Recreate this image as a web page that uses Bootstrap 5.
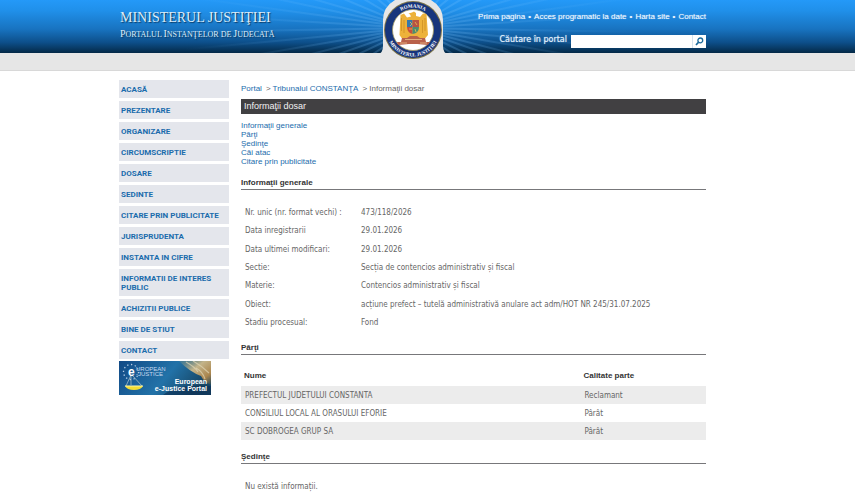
<!DOCTYPE html>
<html lang="ro">
<head>
<meta charset="utf-8">
<meta name="viewport" content="width=device-width, initial-scale=1">
<title>Informații dosar - Tribunalul CONSTANȚA</title>
<link href="https://cdn.jsdelivr.net/npm/bootstrap@5.3.0/dist/css/bootstrap.min.css" rel="stylesheet">
<style>
  :root { --blue: #1b6cac; --line: #77777a; }
  body { font: 8px/9px "Liberation Sans", Arial, sans-serif; color: #666; background: #fff; }
  a { color: var(--blue); text-decoration: none; }
  a:hover { text-decoration: underline; }
  .page-frame { padding-right: 30px; }
  .page-inner { max-width: 587px; margin: 0 auto; }
  .site-head { position: relative; background: linear-gradient(#2499f8 0, #2090ea 20%, #1873c0 55%, #0d4f8a 80%, #042947 100%); height: 53px; }
  .rays { position: absolute; inset: 0; overflow: hidden; padding-right: 30px; }
  .rays svg { display: block; margin: 0 auto; width: 587px; height: 53px; }
  .brand-name { font: 14px/18px "Liberation Serif", "Times New Roman", serif; }
  .brand-sub { font: 8px/14px "Liberation Serif", "Times New Roman", serif; }
  .brand-sub b { font-size: 10px; font-weight: normal; }
  .brand a { color: #dcecf8; text-shadow: 1px 1px 1px #0a3b66; padding: 9px 0 0 1px; }
  .top-links { column-gap: 3px; font-size: 8px; line-height: 10px; padding-top: 12px; text-shadow: 0 0 1px #9cc8ee; }
  .top-links a, .top-links span { color: #eef7ff; }
  .search label { font: 8px/12px "DejaVu Sans", Verdana, sans-serif; color: #e6f2fc; text-shadow: 0 0 1px #a9cdec; padding-bottom: 2px; }
  .search .form-control { width: 121px; height: 13px; min-height: 0; padding: 0 3px; font-size: 8px; border: 0; border-radius: 0; background: #fff; }
  .search button { width: 14px; height: 13px; padding: 0; border: 0; border-left: 1px solid #d5e3ee; border-radius: 0; background: #fff; display: flex; align-items: center; justify-content: center; }
  .strip { height: 18px; background: #e6e6e6; border-bottom: 1px solid #d8d8d8; }
  .crest { position: absolute; left: 0; right: 0; top: 0; padding-right: 30px; pointer-events: none; }
  .crest svg { display: block; margin: 0 auto; width: 70px; height: 60px; }
  .side { flex: 0 0 110px; padding-top: 9px; }
  .side .side-link { display: block; padding: 5px 2px 4px; background: #e4e6ec; font-family: Roboto, "Liberation Sans", sans-serif; font-weight: bold; line-height: 9px; color: var(--blue); }
  .side ul { row-gap: 3px; }
  .side .banner { margin-top: -1px; }
  .trail { line-height: 10px; padding: 5px 0 5px; }
  .trail a { margin-right: 4px; }
  .trail span + a { margin-left: 2px; }
  .title-bar { font-size: 9px; line-height: 15px; padding: 0 3px; background: #414042; color: #f2f2f2; font-weight: normal; }
  .jump { margin-top: 7px; }
  .sect { font-size: 8px; line-height: 11px; font-weight: bold; color: #333; border-bottom: 1px solid var(--line); padding-bottom: 1px; }
  .first-sect { margin-top: 11px; }
  .body-font { font-family: "DejaVu Sans Condensed", "DejaVu Sans", Tahoma, sans-serif; font-size: 8px; line-height: 10px; color: #666; }
  .facts { height: 128px; margin-top: 14px; margin-bottom: 10px; }
  .facts th { font-weight: normal; width: 116px; padding: 0 0 0 4px; }
  .facts td { padding: 0 4px; }
  .parties { margin-top: 11px; margin-bottom: 11px; }
  .parties td { height: 18px; padding: 1px 4px 0; width: 73%; }
  .parties td + td { width: 27%; }
  .parties thead th { height: 20px; padding: 0 3px; color: #333; font-family: "Liberation Sans", Arial, sans-serif; }
  .parties tbody tr:nth-child(odd) { background: #ececec; }
  .empty-note { margin-top: 18px; }
</style>
<script src="https://cdn.jsdelivr.net/npm/bootstrap@5.3.0/dist/js/bootstrap.bundle.min.js"></script>
</head>
<body>
<header class="site-head">
  <div class="rays" aria-hidden="true">
    <svg viewBox="0 0 587 53">
      <defs>
        <radialGradient id="glow" gradientUnits="userSpaceOnUse" cx="294" cy="28" r="230">
          <stop offset="0" stop-color="#7cc4ff" stop-opacity=".28"/><stop offset=".5" stop-color="#7cc4ff" stop-opacity=".13"/><stop offset="1" stop-color="#7cc4ff" stop-opacity="0"/>
        </radialGradient>
      </defs>
      <path fill="none" stroke="url(#glow)" stroke-width="2" d="M294 28L60 -40M294 28L60 -22M294 28L60 -4M294 28L60 14M294 28L60 32M294 28L60 50M294 28L60 68M294 28L60 88M294 28L60 110M294 28L60 140M294 28L60 180M294 28L130 180M294 28L180 180M294 28L220 180M294 28L60 -70M294 28L60 -110M294 28L100 -130M294 28L150 -130M294 28L200 -130M294 28L527 -40M294 28L527 -22M294 28L527 -4M294 28L527 14M294 28L527 32M294 28L527 50M294 28L527 68M294 28L527 88M294 28L527 110M294 28L527 140M294 28L527 180M294 28L457 180M294 28L407 180M294 28L367 180M294 28L527 -70M294 28L527 -110M294 28L487 -130M294 28L437 -130M294 28L387 -130"/>
    </svg>
  </div>
  <div class="page-frame position-relative">
    <div class="page-inner d-flex justify-content-between">
      <div class="brand">
        <a href="#" class="d-block">
          <span class="brand-name d-block">MINISTERUL JUSTIŢIEI</span>
          <span class="brand-sub d-block"><b>P</b>ORTALUL <b>I</b>NSTANŢELOR DE <b>J</b>UDECATĂ</span>
        </a>
      </div>
      <div>
        <nav class="top-links d-flex justify-content-end" aria-label="Principal">
          <a href="#">Prima pagina</a><span>•</span><a href="#">Acces programatic la date</a><span>•</span><a href="#">Harta site</a><span>•</span><a href="#">Contact</a>
        </nav>
        <form class="search d-flex justify-content-end align-items-center mt-2 pt-1">
          <label for="q" class="me-1">Căutare în portal</label>
          <input id="q" type="text" class="form-control">
          <button type="submit" aria-label="Caută">
            <svg width="9" height="9" viewBox="0 0 9 9" fill="none" stroke="#1c6a9c"><circle cx="5.3" cy="3.4" r="2.4" stroke-width="1.3"/><path d="M3.6 5.2L1 8" stroke-width="1.7"/></svg>
          </button>
        </form>
      </div>
    </div>
  </div>
  <div class="crest">
    <svg viewBox="0 0 70 60" role="img" aria-label="România, Ministerul Justiției">
      <defs>
        <path id="arc-top" d="M12.5 30A22.5 22.5 0 0 1 57.5 30"/>
        <path id="arc-low" d="M8.5 30A26.5 26.5 0 0 0 61.5 30"/>
      </defs>
      <path d="M0 54Q5 53 5 46V20Q5 7 17 0H53Q65 7 65 20V46Q65 53 70 54V60H0Z" fill="#e6e6e6"/>
      <circle cx="35" cy="30" r="29" fill="#7c7448"/>
      <circle cx="35" cy="30" r="28" fill="#17357c"/>
      <circle cx="35" cy="30" r="20.5" fill="#fff" stroke="#a59b62" stroke-width=".8"/>
      <g font-family="Liberation Serif, serif" font-size="5" font-weight="bold" fill="#fff" text-anchor="middle">
        <text><textPath href="#arc-top" startOffset="50%">ROMANIA</textPath></text>
        <text><textPath href="#arc-low" startOffset="50%">MINISTERUL JUSTIŢIEI</textPath></text>
      </g>
      <path d="M34 12.5l2-1 2 1.500v3l4 1 3-3.500 3.500 0.500 1.500 21-3 3.500H24l-2.500-3.500 1-20 3.500-1.500 3 4 4-1-1-2-1.500-1z" fill="#edb23a"/>
      <path d="M23.500 18v13M26 20v13M44.500 20v13M47 18v13" stroke="#c98b22" stroke-width=".7"/>
      <path d="M29 20h5.500v7H29z" fill="#3578ad"/><path d="M34.500 20H41v7h-6.500z" fill="#b95342"/>
      <path d="M29 27h5.500v7q-5-1-5.500-7z" fill="#c74f3c"/><path d="M34.500 27H41q0 6-6.500 7z" fill="#4d8c70"/>
      <path d="M32 22l2 2-2 2M37 22l2 3M31 29h3M37 29l1 3" stroke="#e9bf4e" stroke-width=".8" fill="none"/>
      <path d="M24 38h5l3-2h7l3 2h5l1 4 4 0-2 3-11-1H31l-11 1-1-3 4 0z" fill="#b9614a"/>
      <path d="M27 39.500h17M22 43h7M42 43h7" stroke="#edc08c" stroke-width=".8"/>
    </svg>
  </div>
</header>
<div class="strip"></div>

<div class="page-frame">
  <div class="page-inner d-flex">
    <aside class="side me-2">
      <ul class="list-unstyled d-flex flex-column mb-0">
        <li><a class="side-link" href="#">ACASĂ</a></li>
        <li><a class="side-link" href="#">PREZENTARE</a></li>
        <li><a class="side-link" href="#">ORGANIZARE</a></li>
        <li><a class="side-link" href="#">CIRCUMSCRIPTIE</a></li>
        <li><a class="side-link" href="#">DOSARE</a></li>
        <li><a class="side-link" href="#">SEDINTE</a></li>
        <li><a class="side-link" href="#">CITARE PRIN PUBLICITATE</a></li>
        <li><a class="side-link" href="#">JURISPRUDENTA</a></li>
        <li><a class="side-link" href="#">INSTANTA IN CIFRE</a></li>
        <li><a class="side-link" href="#">INFORMATII DE INTERES PUBLIC</a></li>
        <li><a class="side-link" href="#">ACHIZITII PUBLICE</a></li>
        <li><a class="side-link" href="#">BINE DE STIUT</a></li>
        <li><a class="side-link" href="#">CONTACT</a></li>
        <li class="banner"><a href="#" class="d-block" aria-label="European e-Justice Portal">
          <svg class="d-block" width="92" height="34" viewBox="0 0 92 34">
            <defs>
              <linearGradient id="sea" x1="0" y1="0" x2="1" y2=".3"><stop offset="0" stop-color="#124a86"/><stop offset=".6" stop-color="#2272a8"/><stop offset="1" stop-color="#174766"/></linearGradient>
              <linearGradient id="gold" x1="0" y1="0" x2="1" y2="1"><stop offset="0" stop-color="#6d8a82" stop-opacity=".3"/><stop offset=".4" stop-color="#c3b48a"/><stop offset=".75" stop-color="#ab864e"/><stop offset="1" stop-color="#21475c"/></linearGradient>
            </defs>
            <path d="M0 0h92v34H0z" fill="url(#sea)"/>
            <path d="M60 0h32v24q-7-3-10-9-11-4-22-15z" fill="url(#gold)"/>
            <path d="M67 1q9 5 12 10M74 0q9 5 16 12M77 7q7 4 9 11" stroke="#e0d6b5" stroke-width="1.2" fill="none" opacity=".7"/>
            <path d="M44 34q15-12 48-9v9z" fill="#0c2d52" opacity=".6"/>
            <circle cx="12" cy="11" r="7.5" fill="none" stroke="#b7cde5" stroke-width="1.3" stroke-dasharray="1.3 2.6"/>
            <path d="M12 14L7 25M13 14l10 11M12 14v10" stroke="#b7c8cf" stroke-width=".7"/>
            <path d="M6 25h18q-2 4-9 4t-9-4z" fill="#f3dc33"/><path d="M6 25h18" stroke="#fff7a8"/>
            <g fill="#fff" font-family="Liberation Sans, Arial, sans-serif">
              <text x="9" y="15" font-size="12" font-weight="bold">e</text>
              <text x="17" y="10" font-size="6" fill="#c6daf0">UROPEAN</text>
              <text x="17" y="15" font-size="6" fill="#c6daf0">-JUSTICE</text>
              <text x="88" y="23" font-size="7" font-weight="bold" text-anchor="end">European</text>
              <text x="88" y="30" font-size="7" font-weight="bold" text-anchor="end">e-Justice Portal</text>
            </g>
          </svg></a></li>
      </ul>
    </aside>

    <main class="flex-grow-1 ms-1 pt-2">
      <nav class="trail" aria-label="Cale">
        <a href="#">Portal</a><span>&gt;</span><a href="#">Tribunalul CONSTANŢA</a><span>&gt; Informaţii dosar</span>
      </nav>
      <h1 class="title-bar mb-0">Informaţii dosar</h1>
      <ul class="jump list-unstyled mb-0">
        <li><a href="#generale">Informaţii generale</a></li>
        <li><a href="#parti">Părţi</a></li>
        <li><a href="#sedinte">Şedinţe</a></li>
        <li><a href="#cai">Căi atac</a></li>
        <li><a href="#citare">Citare prin publicitate</a></li>
      </ul>

      <h2 id="generale" class="sect first-sect mb-0">Informaţii generale</h2>
      <table class="facts body-font w-100">
        <tbody>
          <tr><th scope="row">Nr. unic (nr. format vechi) :</th><td>473/118/2026</td></tr>
          <tr><th scope="row">Data inregistrarii</th><td>29.01.2026</td></tr>
          <tr><th scope="row">Data ultimei modificari:</th><td>29.01.2026</td></tr>
          <tr><th scope="row">Sectie:</th><td>Secția de contencios administrativ și fiscal</td></tr>
          <tr><th scope="row">Materie:</th><td>Contencios administrativ și fiscal</td></tr>
          <tr><th scope="row">Obiect:</th><td>acțiune prefect – tutelă administrativă anulare act adm/HOT NR 245/31.07.2025</td></tr>
          <tr><th scope="row">Stadiu procesual:</th><td>Fond</td></tr>
        </tbody>
      </table>

      <h2 id="parti" class="sect mb-0">Părţi</h2>
      <table class="parties body-font w-100">
        <thead><tr><th scope="col">Nume</th><th scope="col">Calitate parte</th></tr></thead>
        <tbody>
          <tr><td>PREFECTUL JUDETULUI CONSTANTA</td><td>Reclamant</td></tr>
          <tr><td>CONSILIUL LOCAL AL ORASULUI EFORIE</td><td>Pârât</td></tr>
          <tr><td>SC DOBROGEA GRUP SA</td><td>Pârât</td></tr>
        </tbody>
      </table>

      <h2 id="sedinte" class="sect mb-0">Şedinţe</h2>
      <p class="body-font empty-note mb-0 ps-1">Nu există informații.</p>
    </main>
  </div>
</div>
</body>
</html>
